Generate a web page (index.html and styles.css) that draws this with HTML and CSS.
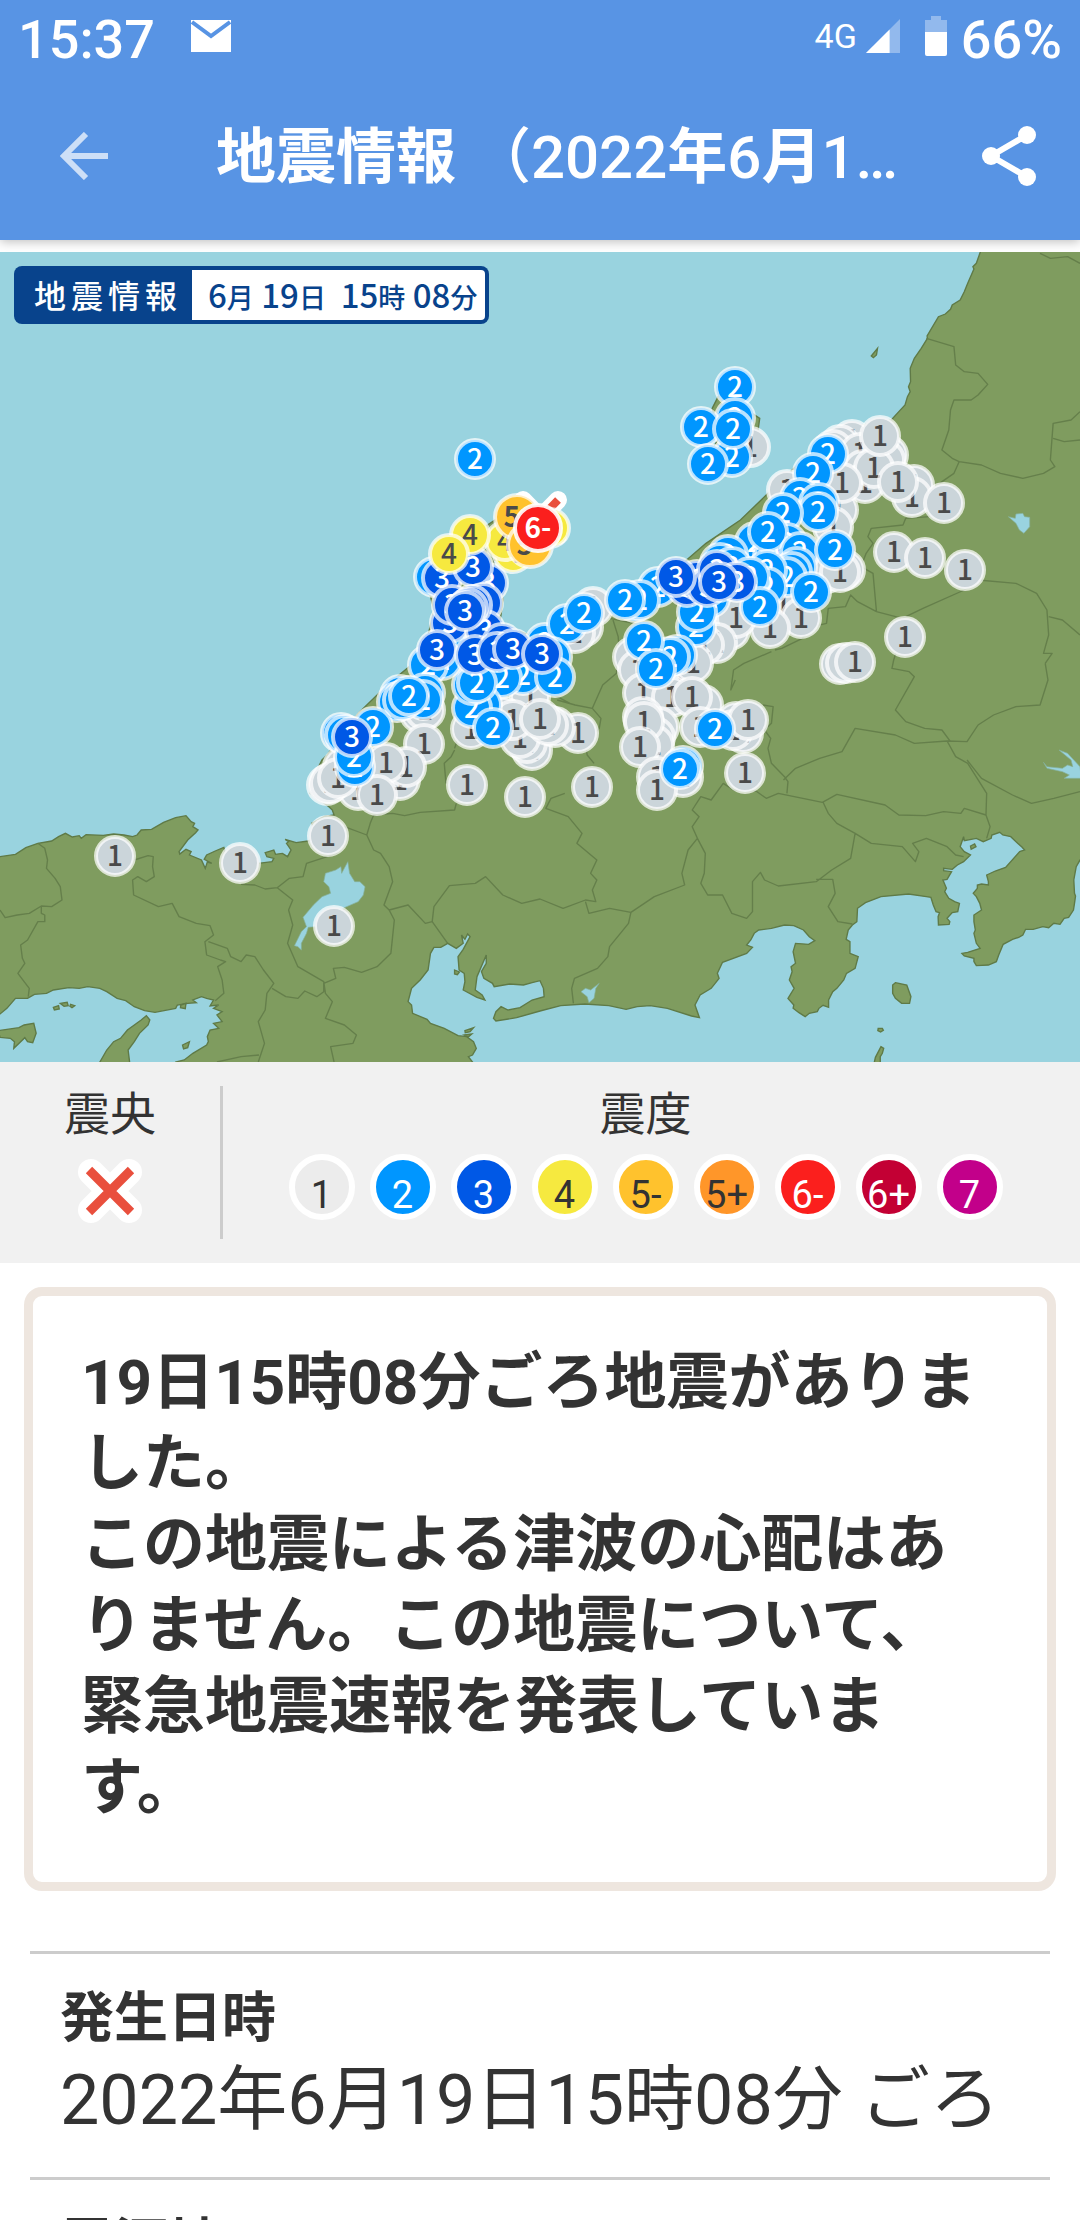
FILE: index.html
```html
<!DOCTYPE html>
<html lang="ja">
<head>
<meta charset="utf-8">
<meta name="viewport" content="width=device-width, initial-scale=1">
<title>地震情報</title>
<link rel="stylesheet" href="styles.css">
</head>
<body>
<header class="top">
  <div class="status">
    <span class="clock">15:37</span>
    <svg class="mail" viewBox="0 0 40 32" aria-hidden="true"><path fill="#fff" d="M0 0h40v32H0z"/><path fill="none" stroke="#5894e4" stroke-width="4" d="M1 2l19 14L39 2"/></svg>
    <span class="network">4G</span>
    <svg class="signal" viewBox="0 0 36 36" aria-hidden="true"><path fill="#fff" opacity=".35" d="M36 0v36H0z"/><path fill="#fff" d="M25 11v25H0z"/></svg>
    <svg class="battery" viewBox="0 0 22 40" aria-hidden="true"><path fill="#fff" opacity=".35" d="M6 0h10v4h6v13H0V4h6z"/><path fill="#fff" d="M0 16h22v22q0 2-2 2H2q-2 0-2-2z"/></svg>
    <span class="percent">66%</span>
  </div>
  <div class="appbar">
    <button class="icon-btn" type="button" aria-label="戻る"><svg class="back" viewBox="0 0 48 48"><path fill="none" stroke="#fff" stroke-opacity=".7" stroke-width="6" d="M48 24H5M26 2L4 24l22 22"/></svg></button>
    <h1 class="title"><b>地震情報</b> （2022<b>年</b>6<b>月</b>1…</h1>
    <button class="icon-btn" type="button" aria-label="共有"><svg class="share" viewBox="0 0 54 60"><path fill="none" stroke="#fff" stroke-width="6" d="M45 9L9 30l36 21"/><g fill="#fff"><circle cx="45" cy="9" r="9"/><circle cx="9" cy="30" r="9"/><circle cx="45" cy="51" r="9"/></g></svg></button>
  </div>
</header>
<main class="content">
  <div class="map">
    <svg class="map-art" viewBox="0 0 1080 810" role="img" aria-label="震度分布図">
      <rect width="1080" height="810" fill="#99d3df"/>
      <svg x="0" y="0" width="1080" height="810" viewBox="0 -1224 3136 2430" preserveAspectRatio="none">
        <g class="land">
          <path d="M-20 592L0 590L45 583L75 563L110 550L150 543L170 530L190 520L210 531L230 527L236 535L250 524L300 526L330 522L360 525L385 530L398 525L410 510L440 508L475 487L510 473L540 467L555 485L565 490L560 500L575 510L568 518L545 540L520 575L522 582L540 568L555 575L550 585L585 600L596 625L602 606L615 610L593 598L600 585L625 573L650 562L660 600L700 612L750 610L790 605L795 595L775 590L770 578L795 570L800 583L820 580L835 590L845 570L832 550L838 545L828 538L860 548L895 543L920 530L905 490L940 470L970 465L965 450L955 440L900 400L920 330L935 300L950 285L1040 160L1130 70L1200 10L1240 -60L1260 -150L1250 -190L1229 -260L1306 -330L1452 -430L1587 -460L1500 -290L1432 -300L1461 -180L1451 -110L1548 -70L1648 -100L1750 -190L1840 -230L1960 -270L2050 -350L2150 -420L2230 -500L2330 -600L2420 -690L2588 -720L2610 -745L2628 -765L2635 -790L2643 -805L2638 -820L2644 -835L2643 -875L2655 -905L2675 -935L2693 -965L2692 -972L2725 -1030L2745 -1038L2760 -1052L2765 -1065L2788 -1080L2800 -1105L2810 -1130L2828 -1173L2825 -1180L2835 -1190L2852 -1240L3160 -1240V598L3136 600L3125 620L3118 660L3120 700L3123 708L3120 730L3117 750L3103 772L3090 775L3078 793L3060 790L3045 803L3028 800L3000 808L2978 808L2970 825L2958 832L2940 838L2913 853L2900 885L2893 905L2870 915L2835 917L2828 905L2828 895L2800 888L2793 880L2810 877L2846 865L2835 850L2828 820L2832 810L2828 785L2828 765L2850 750L2845 730L2835 710L2826 700L2838 685V675L2850 672L2870 675V665L2865 645L2890 633L2920 622L2961 575L2975 570L2968 562L2955 550L2935 530L2912 525L2903 517L2880 525L2878 535L2855 545L2835 535L2800 542L2798 530L2788 560L2800 575L2818 585L2798 605L2780 615L2765 628L2740 625V632L2763 635L2750 658L2738 660L2748 685L2743 695L2755 715L2772 725L2786 730L2781 755L2765 758L2750 775L2758 785L2756 793L2725 795L2724 770L2728 758L2718 755L2710 735L2703 712L2690 710L2638 702L2558 710L2513 728L2490 745L2488 785L2475 795L2463 810L2457 838L2468 845L2468 880L2492 890L2483 925L2458 940L2450 960L2430 985L2418 995L2406 1020L2406 1042L2390 1036L2378 1045L2373 1055L2350 1060L2338 1070L2320 1058L2303 1045L2305 1035L2288 1015L2306 985L2292 960L2300 935L2297 920L2310 910L2303 875L2310 850L2348 853L2366 842L2350 830L2333 810L2305 797L2278 795L2240 805L2203 810L2190 820L2180 840L2168 855L2185 862L2168 880L2098 907L2083 940L2088 955L2065 985L2033 1005L2018 1035L2031 1073L2008 1068L1938 1045L1888 1037L1850 1040L1818 1048L1768 1037L1698 1032L1628 1037L1568 1053L1500 1073L1440 1083L1433 1075L1440 1055L1455 1040L1475 1050L1510 1043L1545 1020L1580 1010L1578 985L1568 962L1545 968L1520 975L1480 972L1435 980L1430 970L1405 955L1398 935L1412 910V885L1385 950L1380 990L1400 1005L1408 1020L1385 1012L1345 990L1350 965L1348 940L1333 930L1330 890L1345 868L1365 830L1358 822L1350 838L1340 825L1345 850L1325 865L1300 850L1280 862L1260 862L1250 880L1243 930L1220 960L1195 985L1185 1025L1195 1035L1198 1060L1240 1078L1250 1090L1290 1105L1330 1127L1355 1130L1375 1145L1383 1165L1372 1185L1360 1190L1375 1210L1360 1230H500L510 1206L535 1200L560 1180L600 1155L605 1145L602 1130L610 1110L635 1105L620 1090L645 1085L630 1065L645 1055L620 1045L635 1035L610 1038L620 1020L600 1015L585 1010L560 1020L570 1028L545 1030L515 1035L510 1045L450 1057L420 1052L390 1040L365 1022L340 1015L310 995L290 985L255 980L230 985L200 983L155 990L135 1000L100 1003L80 1015L45 1015L20 1045L0 1062L-20 1070z"/>
          <path d="M290 1206L310 1170L330 1145L350 1135L370 1110L390 1095L410 1080L425 1067L435 1080L430 1095L405 1120L390 1145L372 1170L378 1220L285 1220zM-5 1112L55 1103L70 1095L98 1090L105 1120L95 1148L80 1145L72 1133L60 1145L40 1165L42 1145L30 1135L0 1132zM2600 968L2633 975L2645 1010L2641 1030L2618 1030L2600 1015L2592 1000V975zM2550 1105h12l3 6-8 5-8-4zM2558 1160l8 5-4 15-6 10v20h-18l4-18zM2068 -755L2090 -800L2150 -820L2170 -750L2206 -725L2200 -680L2130 -590L2050 -590L2088 -670zM2530 -912L2548 -935L2545 -915L2536 -907zM155 1042l15-5 2 10-14 3zM175 1030l20-3 3 10-12 2zM205 1033l12 4-8 6-6-4zM525 1035l15-5-2 16-14-3zM530 1155l20-10-5 18-12 4zM1320 930l14 6-6 8-8-2zM1350 1112l25-9-10 12-14 3zM1348 1125l22-3-10 9zM2818 558l12-6 4 8-14 8z"/>
        </g>
        <g class="water">
          <path d="M945 640L975 630L990 620L992 640L1010 605L1015 640L1030 665L1045 665L1060 680L1055 705L1040 725L1000 743L960 770L915 800L895 802L890 820L875 850L875 870L865 860L855 857L875 815L890 800L880 772L910 735L935 710L960 700L955 680L940 665zM2928 -430L2948 -425L2950 -438L2970 -440L2975 -430L2990 -428V-400L2973 -380L2960 -390L2950 -410zM1700 985L1715 990L1740 970L1730 985L1725 1015L1710 1028L1705 1010L1687 995zM3030 307L3040 320L3085 325L3100 315L3115 320L3110 300L3075 270L3100 280L3136 320L3140 355L3090 355L3105 345L3085 335L3040 325z"/>
        </g>
        <g class="border">
          <path d="M110 550L130 565L138 600L135 625L160 655L175 680L180 720L150 740L120 738L85 760L50 765L15 773L0 750M120 740V760L130 765V785L110 785L80 840L60 855L65 895L72 910L52 940L70 965L85 985L82 1010M390 600L430 587L445 590L443 620L448 650L425 665L400 650L385 660L388 705L460 740L500 730L520 770L570 790L610 797L620 825L595 845L600 885L640 900L655 905L632 920L645 960L650 1000L625 1022M605 845L660 865L670 890L700 905L715 885L740 890L765 930L795 970L775 1000L770 1050L750 1085L768 1150L750 1206M790 985L830 1010L865 1015L885 993L920 1010L940 995V970L975 955L968 925L1000 922L1050 937L1095 920L1135 880L1145 780L1130 750L1115 735L1140 665L1130 620L1105 580L1085 570L1065 525L1075 490L1085 465L1140 460L1175 467L1220 457L1320 450L1325 430M700 673L740 675L770 687L805 683L840 655L880 650L890 610L950 590L980 580M805 683L850 720L838 750L850 795L835 850L865 920L940 965L945 1000L965 1025L945 1075L1000 1095L1035 1125L1025 1150L960 1160L970 1206M630 1206L700 1190L752 1185M1000 500L1065 525M1130 750L1185 735L1235 790L1255 785L1300 850M1255 785L1260 740L1305 677L1380 670L1410 650L1460 705L1515 730L1568 717L1635 745L1700 720L1730 725L1720 690L1733 660L1715 640L1733 600L1675 550L1690 520L1650 470L1585 445L1600 415L1640 400M1700 725L1710 760L1770 745L1832 757L1900 710L1988 675L1980 640L1998 570L2025 535L2010 500L2030 470L2010 450L2035 410L2065 420L2100 370L2130 390L2195 393L2225 415L2260 400L2388 427L2430 403L2570 435L2610 465L2688 467L2740 455L2790 460L2800 445L2863 465L2875 500L2865 535M1832 757L1825 790L1770 860L1765 890L1735 925L1668 955L1660 985L1665 1030M2025 535L2048 580L2045 640L2035 670L2055 705L2098 705L2125 760L2168 775L2185 755V665L2208 637L2220 660L2260 678L2370 665L2415 630L2470 595L2483 520L2430 490L2405 460L2390 427M2370 658H2418L2425 700L2405 740L2433 785L2475 792M2483 520L2530 550L2620 560L2658 605L2668 575L2650 550L2690 535L2750 560L2775 585L2798 590M1320 270L1310 290L1290 310L1295 370M1320 265L1328 240M1618 120L1670 135L1720 145L1750 75L1790 40L1795 -20M1720 145L1745 175L1740 205L1700 250L1705 285L1725 310M1600 100L1655 130M2215 135L2245 140L2240 190L2220 210L2238 235L2230 265L2240 310L2278 350L2288 365L2285 400M2275 360L2310 325L2380 295L2445 275L2483 205L2600 225L2655 250L2750 243L2808 245L2840 195L2885 165L2950 140L3020 135L3043 60L3035 10M2750 243L2775 290L2810 310L2865 400L2863 465M2808 300L2850 355L2940 405L2995 430L3060 415L3136 395M2760 245L2735 210L2685 205L2630 185L2600 150L2655 50L2640 35L2590 25L2595 0L2610 -50M2135 60L2122 90L2130 30L2160 10L2240 -25M2690 -965L2770 -940L2775 -885L2800 -865L2840 -860L2868 -827L2840 -795L2820 -780L2770 -780L2760 -750L2755 -690L2735 -630L2765 -605L2785 -595L2770 -560L2728 -530M2785 -595L2850 -585L2905 -560L2970 -545L3030 -560L3063 -580L3050 -600L3058 -710L3110 -720L3136 -745M3058 -665L3090 -655L3136 -660M3020 -1220L3050 -1205L3100 -1210L3136 -1190M2700 -430L2630 -425L2622 -405L2530 -395L2520 -370L2535 -350L2515 -320L2500 -280L2535 -260L2545 -145L2620 -125L2680 -155L2800 -210L2840 -240L2950 -230L3010 -200L3040 -150L3045 -75L3030 -20L3055 -20L3035 10M3045 -130L3085 -120L3136 -75M2545 -145L2490 -175L2470 -195L2455 -160L2405 -155L2400 -110L2360 -100L2330 -65L2270 -35L2250 -30M1780 -120L1795 -70L1800 0M1770 -125L1840 -110"/>
        </g>
      </svg>
      <g class="epicenter"><path class="epicenter-halo" d="M523 248l35 36M558 248l-35 36"/><path class="epicenter-mark" d="M523 248l35 36M558 248l-35 36"/></g>
      <g id="markers"></g>
    </svg>
    <div class="stamp">
      <span class="stamp-name">地震情報</span>
      <time class="stamp-time" datetime="2022-06-19T15:08">6<small>月</small> 19<small>日</small>&nbsp; 15<small>時</small> 08<small>分</small></time>
    </div>
  </div>
  <section class="legend">
    <div class="legend-epi">
      <h2 class="legend-title">震央</h2>
      <svg class="cross" viewBox="0 0 66 66" aria-hidden="true"><path fill="none" stroke="#fff" stroke-width="26" stroke-linejoin="round" stroke-linecap="round" d="M14 14l38 38M52 14L14 52"/><path fill="none" stroke="#e94f3d" stroke-width="9" d="M12 12l42 42M54 12L12 54"/></svg>
    </div>
    <div class="legend-scale">
      <h2 class="legend-title">震度</h2>
      <ul class="scale">
        <li class="dot s1">1</li><li class="dot s2">2</li><li class="dot s3">3</li><li class="dot s4">4</li><li class="dot s5m">5-</li><li class="dot s5p">5+</li><li class="dot s6m">6-</li><li class="dot s6p">6+</li><li class="dot s7">7</li>
      </ul>
    </div>
  </section>
  <p class="notice">19日15時08分ごろ地震がありました。<br>この地震による津波の心配はありません。この地震について、緊急地震速報を発表しています。</p>
  <dl class="facts">
    <div class="fact"><dt>発生日時</dt><dd>2022年6月19日15時08分 ごろ</dd></div>
    <div class="fact"><dt>震源地</dt></div>
  </dl>
</main>
<script src="markers.js"></script>
</body>
</html>
```
FILE: styles.css
```css
* { box-sizing: border-box; }

body {
  margin: 0;
  height: 100vh;
  overflow: hidden;
  display: flex;
  flex-direction: column;
  background: #fff;
  color: #333;
  font-family: Roboto, "Noto Sans CJK JP", sans-serif;
}

.top {
  flex: none;
  background: #5894e4;
  color: #fff;
  box-shadow: 0 2px 10px rgba(0, 0, 0, .25);
}

.status {
  display: flex;
  align-items: center;
  height: 72px;
  padding: 8px 18px 0;
  font-size: 54px;
  font-weight: 500;
  line-height: 64px;
}
.mail { width: 40px; height: 32px; margin: 0 auto 8px 36px; }
.network { font-size: 34px; font-weight: 400; margin: 0 8px 8px 0; }
.signal { width: 36px; height: 34px; margin: 0 24px 8px 0; }
.battery { width: 22px; height: 40px; margin: 0 14px 8px 0; }

.appbar {
  display: flex;
  align-items: center;
  height: 168px;
  padding: 0 32px 0 48px;
}
.icon-btn {
  flex: none;
  display: flex;
  padding: 12px;
  border: 0;
  background: none;
}
.back { width: 48px; height: 48px; }
.share { width: 54px; height: 60px; }
.title {
  flex: 1;
  margin: 4px 0 0 96px;
  font-size: 60px;
  line-height: 84px;
  font-weight: 500;
  white-space: nowrap;
}
.title b { font-weight: 700; }

.content { flex: 1; min-height: 0; overflow: hidden; padding-top: 12px; }

.map { position: relative; }
.map-art { display: block; width: 100%; height: auto; }
.land { fill: #7f9c5f; }
.land path { stroke: #5f7a47; stroke-width: 4; }
.water { fill: #99d3df; stroke: #86b09a; stroke-width: 2; }
.border { fill: none; stroke: #657f4b; stroke-width: 4; stroke-linejoin: round; }
.epicenter { fill: none; stroke-linecap: round; }
.epicenter-halo { stroke: #fff; stroke-width: 18; }
.epicenter-mark { stroke: #e94f3d; stroke-width: 8; stroke-linecap: butt; }

.marker circle { stroke: #fff; stroke-opacity: .72; stroke-width: 4; }
.marker text {
  font-family: "Noto Sans CJK JP", sans-serif;
  font-size: 28px;
  font-weight: 500;
  text-anchor: middle;
  fill: #fff;
}
.m1 circle { fill: #cbd5da; }
.m2 circle { fill: #0096ff; }
.m3 circle { fill: #0058e6; }
.m4 circle { fill: #f6e93f; }
.m5 circle { fill: #ffc22d; }
.m6 circle { fill: #fb1f1d; stroke-opacity: .9; }
.m1 text, .m4 text, .m5 text { fill: #4a4a4a; }
.m5 text, .m6 text { font-weight: 700; }

.stamp {
  position: absolute;
  top: 14px;
  left: 14px;
  display: flex;
  height: 58px;
  padding: 4px;
  border-radius: 8px;
  background: #08438c;
  font-family: "Noto Sans CJK JP", sans-serif;
  font-weight: 500;
  line-height: 48px;
  white-space: nowrap;
}
.stamp-name { padding: 0 10px 0 16px; color: #fff; font-size: 32px; letter-spacing: 5px; }
.stamp-time { padding: 0 8px 0 16px; border-radius: 0 4px 4px 0; background: #fff; color: #08438c; font-size: 33px; }
.stamp-time small { font-size: 27px; }

.legend {
  display: flex;
  padding: 24px 0;
  background: #f1f1f1;
}
.legend-epi {
  flex: 0 0 223px;
  height: 153px;
  border-right: 3px solid #ccc;
  display: flex;
  flex-direction: column;
  align-items: center;
}
.legend-scale {
  flex: 1;
  display: flex;
  flex-direction: column;
  align-items: center;
  padding-right: 12px;
}
.legend-title { margin: 0; font-size: 46px; line-height: 56px; font-weight: 400; }
.cross { width: 66px; height: 66px; margin-top: 16px; }
.scale { display: flex; gap: 15px; margin: 12px 0 0; padding: 0; list-style: none; }
.dot {
  width: 66px;
  height: 66px;
  border: 6px solid #fff;
  border-radius: 50%;
  padding-top: 8px;
  display: flex;
  justify-content: center;
  font-size: 38px;
  line-height: 54px;
  color: #fff;
}
.s1 { background: #ececec; }
.s2 { background: #0096ff; }
.s3 { background: #0058e6; }
.s4 { background: #f6e93f; }
.s5m { background: #ffc22d; }
.s5p { background: #ff9629; }
.s6m { background: #fb1f1d; }
.s6p { background: #c30034; }
.s7 { background: #c2008a; }
.s1, .s4, .s5m, .s5p { color: #333; }

.notice {
  margin: 24px 24px 60px;
  padding: 46px 48px 54px;
  border: 9px solid #eee6df;
  border-radius: 18px;
  font-size: 62px;
  line-height: 81px;
  font-weight: 700;
}

.facts { margin: 0 30px; }
.fact { padding: 26px 30px 35px; border-top: 3px solid #ccc; }
.fact dt { font-size: 54px; line-height: 78px; font-weight: 700; }
.fact dd { margin: 0; font-size: 70px; line-height: 84px; white-space: nowrap; }
```
FILE: markers.js
```js
// Observation points on the 1080 x 810 map, in painting order.
const points = [
  ["1", "852,188 840,193 833,198 860,201 888,203 885,208 863,218 865,231 874,216 787,238 838,258 833,275 842,231 880,184 914,233 912,245 944,251 898,230 894,300 925,306 965,318 905,385 840,412 846,411 855,410 827,321 845,318 840,320 783,355 801,366 770,376 730,378 736,366 717,391 704,393 680,423 693,411 750,195 633,405 638,418 643,441 703,453 672,445 692,445 659,475 655,485 654,493 643,465 644,470 640,495 683,525 657,525 657,538 700,475 743,481 736,470 733,478 748,468 745,521 592,535 578,481 530,445 532,498 527,491 520,486 503,465 513,468 555,475 548,473 540,467 471,477 420,461 425,458 424,492 467,533 525,545 400,528 406,515 386,511 343,515 358,538 377,543 327,533 330,531 338,526 328,584 240,611 115,604 334,674 593,355 583,375 575,381"],
  ["2", "475,207 735,135 735,166 701,175 732,205 733,177 708,212 828,202 813,221 800,246 819,251 818,260 783,261 755,290 787,291 773,305 768,280 800,300 835,298 728,303 720,311 732,315 797,315 792,320 787,325 767,318 767,335 750,325 811,340 710,346 696,375 697,360 760,355 658,335 635,350 640,348 625,348 677,403 670,405 644,389 656,417 715,477 683,514 680,517 545,391 567,372 584,361 552,405 523,423 502,426 555,425 482,453 472,456 472,433 477,431 493,476 447,391 442,408 428,413 425,441 423,448 400,443 397,450 403,448 409,444 373,475 341,481 345,483 355,515 354,505 434,325"],
  ["3", "488,331 442,326 473,315 483,351 450,371 485,378 452,353 472,353 468,356 465,359 437,398 475,403 502,391 497,400 513,397 542,402 352,485 687,335 697,328 707,335 676,325 717,318 737,330 719,330"],
  ["4", "550,276 513,301 505,289 470,283 449,302"],
  ["5-", "517,265 530,293"],
  ["6-", "538,276"]
];

const layer = document.getElementById("markers");
const make = (name, attrs, parent) => {
  const node = document.createElementNS("http://www.w3.org/2000/svg", name);
  Object.entries(attrs).forEach(([key, value]) => node.setAttribute(key, value));
  return parent.appendChild(node);
};

points.forEach(([level, list]) => {
  const radius = { "5-": 22, "6-": 23 }[level] || 19;
  list.split(" ").forEach((pair) => {
    const [x, y] = pair.split(",").map(Number);
    const group = make("g", { class: "marker m" + level[0] }, layer);
    make("circle", { cx: x, cy: y, r: radius }, group);
    make("text", { x, y: y + 10 }, group).textContent = level;
  });
});
```
